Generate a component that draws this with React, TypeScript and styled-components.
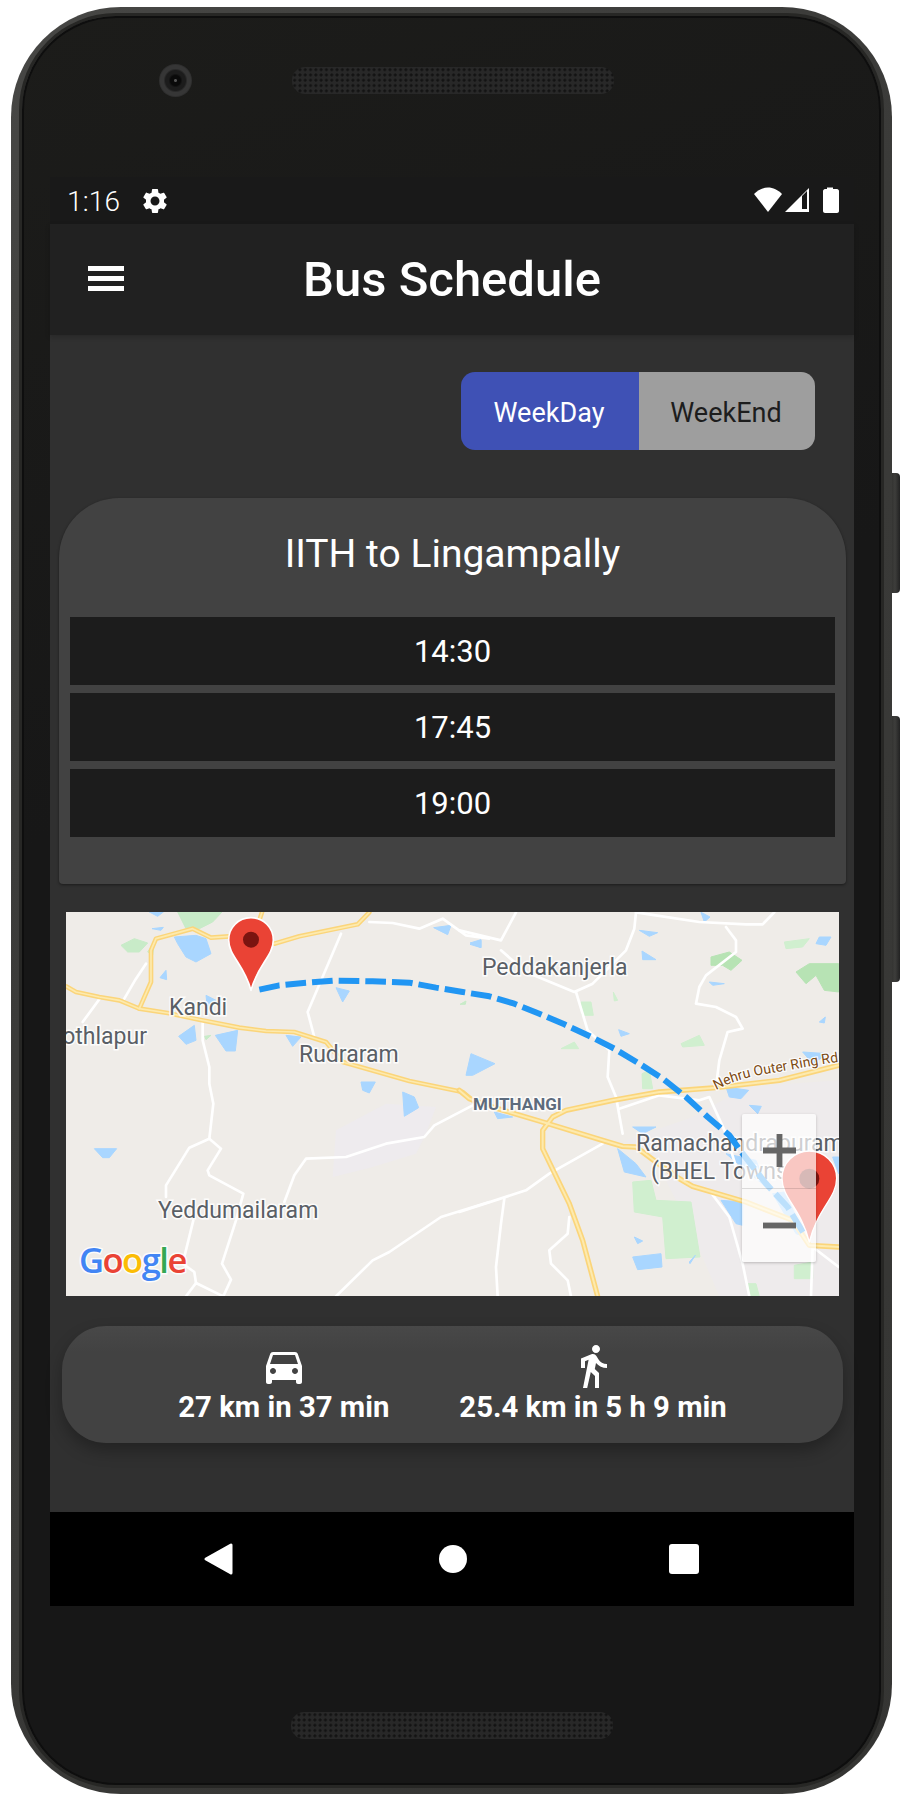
import React from "react";
import styled, { createGlobalStyle } from "styled-components";

const Global = createGlobalStyle`
  html, body { margin: 0; padding: 0; background: #fff; }
  body { font-family: Roboto, "Liberation Sans", sans-serif; overflow: hidden; }
  * { box-sizing: border-box; }
`;

const Page = styled.div`
  width: 909px;
  height: 1794px;
  padding: 7px 0 0 11px;
  overflow: hidden;
  position: relative;
`;
const SideKey = styled.div<{ $top: number; $h: number }>`
  position: absolute;
  left: 890px;
  top: ${(p) => p.$top}px;
  width: 10px;
  height: ${(p) => p.$h}px;
  border-radius: 0 4px 4px 0;
  background: linear-gradient(90deg, #2e2e2c, #3d3d3b 50%, #222 100%);
`;
const Frame = styled.div`
  position: relative;
  z-index: 1;
  width: 881px;
  height: 1787px;
  padding: 11px 13px 11px 13px;
  border-radius: 110px;
  background: linear-gradient(135deg, #474745 0%, #3c3c3a 30%, #353533 100%);
`;
const Bezel = styled.div`
  border-radius: 94px;
  border: 2px solid #0e0e0e;
  box-shadow: 0 0 0 3px #272725;
  background: linear-gradient(160deg, #1c1c1a, #171717 40%);
  display: flex;
  flex-direction: column;
  margin: -2px;
  width: 859px;
  height: calc(100% + 4px);
  overflow: hidden;
`;
const TopBezel = styled.div`
  height: 159px;
  flex: none;
  padding: 46px 0 0 135px;
  display: flex;
  align-items: flex-start;
  gap: 100px;
`;
const Camera = styled.div`
  width: 33px;
  height: 33px;
  border-radius: 50%;
  background: radial-gradient(circle, #555 0 1px, #0a0a0a 2px 5px, #1c1c1c 7px 10px, #363636 12px 15px, #2f2f2f 16px);
`;
const Speaker = styled.div`
  width: 322px;
  height: 27px;
  border-radius: 13px;
  background: #282828 radial-gradient(circle, #131313 1.2px, transparent 1.7px) 0 0 / 5.3px 5.3px;
  margin-top: 3px;
`;
const Screen = styled.div`
  flex: none;
  margin-left: 26px;
  width: 804px;
  height: 1429px;
  display: flex;
  flex-direction: column;
`;
const BottomBezel = styled.div`
  flex: 1;
  padding: 103px 0 0 267px;
`;

const StatusBar = styled.div`
  height: 47px;
  flex: none;
  background: #191919;
  display: flex;
  align-items: center;
  padding: 0 15px 2px 17px;
  color: #fff;
`;
const Clock = styled.span`
  font-size: 28px;
  font-weight: 300;
  letter-spacing: 0.2px;
  margin-top: 3px;
`;
const GearIcon = styled.svg`
  width: 30px;
  height: 30px;
  margin: 2px 0 0 20px;
  fill: #fff;
`;
const StatusIcons = styled.div`
  margin-left: auto;
  display: flex;
  align-items: center;
`;
const StatusSvg = styled.svg`
  display: block;
  fill: #fff;
`;

const AppBar = styled.header`
  height: 111px;
  flex: none;
  background: #212121;
  box-shadow: 0 2px 5px rgba(0, 0, 0, 0.18);
  display: grid;
  grid-template-columns: 1fr auto 1fr;
  align-items: center;
  position: relative;
  color: #fff;
`;
const Burger = styled.div`
  margin: 0 0 2px 38px;
  width: 36px;
  display: flex;
  flex-direction: column;
  gap: 5.5px;
  span {
    display: block;
    height: 4.5px;
    background: #fff;
  }
`;
const Title = styled.h1`
  margin: 0;
  font-size: 49px;
  font-weight: 500;
  line-height: 1;
`;

const Content = styled.main`
  flex: 1;
  background: #303030;
  display: flex;
  flex-direction: column;
  min-height: 0;
`;
const Toggle = styled.div`
  margin: 37px 39px 0 0;
  align-self: flex-end;
  display: flex;
  height: 78px;
  border-radius: 14px;
  overflow: hidden;
`;
const ToggleItem = styled.div<{ $on?: boolean; $w: number }>`
  width: ${(p) => p.$w}px;
  display: flex;
  align-items: center;
  justify-content: center;
  padding: 3px 2px 0 0;
  font-size: 27px;
  background: ${(p) => (p.$on ? "#3f51b5" : "#9e9e9e")};
  color: ${(p) => (p.$on ? "#fff" : "#1d1d1d")};
`;
const ScheduleCard = styled.section`
  margin: 48px 0 0 9px;
  width: 787px;
  height: 386px;
  flex: none;
  border-radius: 60px 60px 4px 4px;
  background: #424242;
  box-shadow: 0 1px 3px rgba(0, 0, 0, 0.45);
  padding: 0 11px;
  display: flex;
  flex-direction: column;
`;
const CardTitle = styled.h2`
  margin: 0;
  height: 119px;
  flex: none;
  display: flex;
  align-items: center;
  justify-content: center;
  padding-bottom: 8px;
  font-size: 39px;
  font-weight: 400;
  color: #fff;
`;
const Rows = styled.div`
  display: flex;
  flex-direction: column;
  gap: 8px;
`;
const TimeRow = styled.div`
  height: 68px;
  background: #1c1c1c;
  display: flex;
  align-items: center;
  justify-content: center;
  font-size: 31px;
  color: #fff;
`;
const MapBox = styled.div`
  position: relative;
  margin: 28px 0 0 16px;
  width: 773px;
  height: 384px;
  flex: none;
  overflow: hidden;
  background: #efece8;
`;
const MapSvg = styled.svg`
  display: block;
  width: 773px;
  height: 384px;
  font-family: Roboto, sans-serif;
`;
const Place = styled.text<{ $size?: number; $bold?: boolean }>`
  font-size: ${(p) => p.$size ?? 23}px;
  font-weight: ${(p) => (p.$bold ? 700 : 400)};
  fill: ${(p) => (p.$bold ? "#5d6b7d" : "#5a5f66")};
  stroke: rgba(255, 255, 255, 0.85);
  stroke-width: 3px;
  paint-order: stroke;
`;
const RoadName = styled.text`
  font-size: 14px;
  fill: #7c4a12;
  stroke: rgba(255, 255, 255, 0.85);
  stroke-width: 2.5px;
  paint-order: stroke;
`;
const GoogleMark = styled.text`
  font-family: "Open Sans", Roboto, sans-serif;
  font-size: 34.5px;
  font-weight: 600;
  letter-spacing: -1.5px;
  stroke: rgba(255, 255, 255, 0.85);
  stroke-width: 3px;
  paint-order: stroke;
`;
const ZoomPanel = styled.div`
  position: absolute;
  left: 676px;
  top: 202px;
  width: 74px;
  height: 148px;
  border-radius: 2px;
  background: rgba(255, 255, 255, 0.7);
  box-shadow: 0 1px 3px rgba(0, 0, 0, 0.22);
  display: flex;
  flex-direction: column;
`;
const ZoomBtn = styled.div<{ $divider?: boolean }>`
  flex: 1;
  position: relative;
  display: flex;
  align-items: center;
  justify-content: center;
  border-bottom: ${(p) => (p.$divider ? "1px solid rgba(0,0,0,.12)" : "none")};
`;
const ZoomSvg = styled.svg`
  width: 33px;
  height: 33px;
  fill: #666;
`;

const RouteCard = styled.section`
  margin: 30px 0 0 12px;
  width: 781px;
  height: 117px;
  flex: none;
  border-radius: 44px;
  background: linear-gradient(180deg, #484848, #424242 22%);
  box-shadow: 0 8px 16px rgba(0, 0, 0, 0.28);
  display: flex;
  justify-content: center;
  gap: 70px;
  padding-top: 16px;
  color: #fff;
`;
const RouteItem = styled.div`
  display: flex;
  flex-direction: column;
  align-items: center;
`;
const RouteIcon = styled.svg`
  width: 48px;
  height: 48px;
  fill: #fff;
  display: block;
`;
const RouteText = styled.span`
  font-size: 29.3px;
  font-weight: 700;
  line-height: 32px;
  margin-top: 1px;
`;
const NavBar = styled.nav`
  height: 94px;
  flex: none;
  background: #000;
  display: flex;
  align-items: center;
  justify-content: center;
  gap: 203px;
  padding-right: 3px;
`;
const NavSvg = styled.svg<{ $pull?: number }>`
  display: block;
  width: 32px;
  height: 34px;
  fill: #fff;
  margin-left: ${(p) => -(p.$pull ?? 0)}px;
`;

const water2 = [
  "M405,110 L470,105 L500,115 L515,160 L470,185 L440,170 L415,130 Z",
  "M330,35 L372,35 L355,48 Z",
  "M338,85 L372,81 L365,90 Z",
  "M362,232 L380,210 L382,238 Z",
  "M500,285 L530,300 L505,330 Z",
  "M418,408 L465,375 L470,420 L440,432 Z",
  "M528,405 L595,390 L588,452 L560,452 Z",
  "M740,405 L785,410 L760,438 Z",
  "M890,262 L930,272 L910,305 Z",
  "M1183,82 L1235,75 L1225,103 Z",
  "M1292,132 L1325,120 L1325,142 Z",
  "M965,545 L1008,545 L990,578 L970,570 Z",
  "M1090,575 L1125,590 L1138,622 L1095,648 Z",
  "M165,745 L232,745 L210,772 L190,772 Z",
];
const green2 = [
  "M415,35 L548,35 L520,65 L480,85 L440,85 Z",
  "M245,135 L285,115 L325,128 L300,155 L265,155 Z",
  "M325,155 L345,125 L340,165 Z",
  "M1262,312 L1280,302 L1278,312 Z",
  "M496,408 L515,405 L500,418 Z",
];
const white2 = [
  "M130,365 L185,290",
  "M255,295 L290,235 L320,190",
  "M490,365 L490,420 L510,500 L510,550 L522,610 L510,715 L450,742 L380,855 L380,890",
  "M510,715 L545,745 L505,810 L510,825 L612,880 L590,960 L548,1090 L575,1138 L552,1188 L470,1148 L440,1188",
  "M462,960 L430,1090 L465,1115 L470,1148",
  "M735,905 L765,825 L800,775 L920,770 L1040,730 L1155,710 L1185,675 L1300,615",
  "M890,1188 L1000,1080 L1050,1055 L1205,950 L1350,905",
  "M905,100 L805,335 L825,410",
  "M990,65 L1060,68 L1140,85 L1210,55 L1280,105 L1350,115",
];
const yellow2 = [
  "M80,258 L110,275 L180,290 L240,300 L300,325 L385,338 L480,358 L600,382 L680,392 L765,395 L860,425 L910,485 L1110,542 L1270,575 L1300,600",
  "M300,325 L335,245 L335,150 L350,115 L460,85 L515,112 L570,108 L640,105 L705,130 L780,108 L955,72 L990,36",
  "M668,36 L660,60",
];
const water3 = [
  "M540,90 L595,97 L570,108 Z",
  "M548,152 L590,178 L550,178 Z",
  "M725,36 L752,50 L735,65 Z",
  "M32,128 L65,118 L65,142 Z",
  "M1080,110 L1115,110 L1100,135 L1070,130 Z",
  "M750,245 L795,250 L760,255 Z",
  "M20,525 L35,460 L107,490 L40,525 Z",
  "M478,388 L510,400 L485,408 Z",
  "M1030,455 L1105,460 L1060,490 Z",
  "M1080,365 L1098,350 L1095,368 Z",
  "M800,560 L868,570 L845,595 L810,590 Z",
  "M870,615 L906,618 L895,640 Z",
  "M520,680 L590,680 L550,700 Z",
  "M105,635 L160,650 L115,655 Z",
  "M475,745 L530,790 L560,830 L495,815 Z",
  "M785,900 L850,905 L850,975 L830,970 Z",
  "M520,1070 L605,1060 L608,1100 L535,1108 Z",
  "M690,1085 L708,1065 L692,1090 Z",
  "M525,1010 L550,1022 L535,1030 Z",
  "M800,760 L890,780 L920,860 Z",
  "M940,880 L975,875 L1040,1010 L1010,1000 Z",
  "M1120,770 L1138,770 L1138,820 Z",
];
const green3 = [
  "M1010,215 L1050,190 L1138,190 L1138,275 L1095,270 L1070,225 L1040,250 Z",
  "M755,170 L810,155 L848,180 L815,210 L790,195 L755,195 Z",
];
const paleGreen3 = [
  "M975,125 L1050,115 L1030,140 L980,145 Z",
  "M520,845 L575,840 L590,900 L695,905 L722,1070 L620,1075 L610,950 L525,935 Z",
  "M665,430 L720,405 L735,435 L670,440 Z",
  "M305,445 L345,425 L358,445 Z",
  "M365,305 L395,305 L402,345 L368,345 Z",
  "M462,275 L475,300 L465,302 Z",
  "M548,520 L570,510 L580,565 L550,565 Z",
  "M1005,1095 L1060,1085 L1060,1135 L1005,1135 Z",
  "M865,1150 L890,1150 L900,1188 L870,1188 Z",
];
const white3 = [
  "M170,36 L125,120 L0,90",
  "M125,150 L200,215 L345,275 L400,250 L500,150 L525,85 L530,36",
  "M350,275 L385,390 L450,450 L445,530 L470,590 L490,700",
  "M530,36 L720,65 L860,72 L910,72 L945,36",
  "M800,80 L830,120 L830,155 L740,225 L720,260 L710,310 L770,320 L830,350 L850,385 L805,395 L780,480 L770,560",
  "M480,625 L600,585 L720,600 L750,590 L800,700 L830,800",
  "M0,935 L200,870 L270,820 L430,730",
  "M135,895 L125,970 L110,1100 L115,1188",
  "M330,950 L325,1000 L270,1050 L275,1090 L325,1140 L335,1188",
  "M750,870 L810,950 L850,1090 L870,1188",
  "M1060,1040 L1055,1188",
  "M1060,1040 L1138,1100",
];
const yellow3 = [
  "M0,570 L30,595 L115,625 L250,665 L430,720 L490,738 L530,740 L590,785 L660,835 L700,858 L860,905 L1000,960 L1050,1035 L1138,1040",
  "M1138,495 L960,540 L770,562 L600,575 L460,600 L320,630 L280,650 L250,690 L250,745 L330,910 L370,1020 L415,1188",
];
const routePts =
  "660,268 720,255 800,247 880,241 1000,243 1110,247 1190,262 1270,275 1350,288 1425,310 1500,340 1575,372 1650,407 1725,445 1800,490 1870,535 1940,590 2005,650 2070,705 2110,760 2180,850 2245,920 2300,1010";
const pinPath = (cx: number, top: number, hw: number, tip: number) => {
  const cy = top + hw;
  return `M${cx},${top} C${cx - hw * 0.56},${top} ${cx - hw},${top + hw * 0.45} ${cx - hw},${cy} C${cx - hw},${cy + hw * 0.72} ${cx - hw * 0.3},${cy + hw * 1.1} ${cx},${tip} C${cx + hw * 0.3},${cy + hw * 1.1} ${cx + hw},${cy + hw * 0.72} ${cx + hw},${cy} C${cx + hw},${top + hw * 0.45} ${cx + hw * 0.56},${top} ${cx},${top} Z`;
};

const Paths = ({ d, stroke, w }: { d: string[]; stroke: string; w: number }) => (
  <g fill="none" stroke={stroke} strokeWidth={w} strokeLinejoin="round" strokeLinecap="round">
    {d.map((p) => (
      <path key={p} d={p} />
    ))}
  </g>
);
const Fills = ({ d, fill }: { d: string[]; fill: string }) => (
  <g fill={fill} stroke={fill} strokeWidth={3} strokeLinejoin="round">
    {d.map((p) => (
      <path key={p} d={p} />
    ))}
  </g>
);

const MapView = () => (
  <MapBox>
    <MapSvg viewBox="0 0 773 384">
      <g transform="translate(-26.67,-11.67) scale(0.33333)">
        <path
          d="M890,690 L1040,610 L1190,620 L1160,700 L1130,760 L1000,800 L880,830 Z"
          fill="#eeebee"
        />
        <path
          d="M2120,560 L2400,540 L2400,1188 L2040,1188 L1960,1000 L1860,800 L1760,720 L1960,650 Z"
          fill="#eeebec"
        />
        <Fills d={green2} fill="#c8ebc8" />
        <Fills d={water2} fill="#a9d6ff" />
        <Paths d={white2} stroke="#ffffff" w={8} />
        <Paths d={yellow2} stroke="#fbd57a" w={14} />
        <Paths d={yellow2} stroke="#fdeaae" w={5} />
        <g transform="translate(1260 0)">
          <Fills d={green3} fill="#b7e3b4" />
          <Fills d={paleGreen3} fill="#d0efcf" />
          <Fills d={water3} fill="#a9d6ff" />
          <Paths d={white3} stroke="#ffffff" w={8} />
          <Paths d={yellow3} stroke="#fbd57a" w={16} />
          <Paths d={yellow3} stroke="#fdeaae" w={6} />
        </g>
      </g>
      <Place x={103} y={103}>Kandi</Place>
      <Place x={81} y={132} textAnchor="end">othlapur</Place>
      <Place x={233} y={150}>Rudraram</Place>
      <Place x={92} y={306}>Yeddumailaram</Place>
      <Place x={416} y={63}>Peddakanjerla</Place>
      <Place x={407} y={198} $size={17} $bold>MUTHANGI</Place>
      <Place x={570} y={239}>Ramachandrapuram</Place>
      <Place x={585} y={267}>(BHEL Township)</Place>
      <defs>
        <path id="ringRoad" d="M650,178 C668,168 690,163 712,160 C730,157 748,153 772,150" />
      </defs>
      <RoadName>
        <textPath href="#ringRoad">Nehru Outer Ring Rd</textPath>
      </RoadName>
      <GoogleMark x={13} y={361}>
        <tspan fill="#4285f4">G</tspan>
        <tspan fill="#ea4335">o</tspan>
        <tspan fill="#fbbc05">o</tspan>
        <tspan fill="#4285f4">g</tspan>
        <tspan fill="#34a853">l</tspan>
        <tspan fill="#ea4335">e</tspan>
      </GoogleMark>
      <g transform="translate(-26.67,-11.67) scale(0.33333)">
        <polyline
          points={routePts}
          fill="none"
          stroke="#2196f3"
          strokeWidth={18}
          strokeDasharray="62 18"
          strokeLinejoin="round"
        />
        <path d={pinPath(635, 52, 67, 270)} fill="#ea4335" stroke="#fff" strokeWidth={5} strokeLinejoin="round" />
        <circle cx={635} cy={118} r={24} fill="#7b1410" />
        <g transform="translate(1260 0)">
          <path d={pinPath(1050, 752, 82, 1025)} fill="#ea4335" stroke="#fff" strokeWidth={4} strokeLinejoin="round" />
          <circle cx={1050} cy={835} r={30} fill="#7b1410" />
        </g>
      </g>
    </MapSvg>
    <ZoomPanel>
      <ZoomBtn $divider>
        <ZoomSvg viewBox="0 0 34 34">
          <path d="M14,0 H20 V14 H34 V20 H20 V34 H14 V20 H0 V14 H14 Z" />
        </ZoomSvg>
      </ZoomBtn>
      <ZoomBtn>
        <ZoomSvg viewBox="0 0 34 34">
          <rect x="0" y="14" width="34" height="6" />
        </ZoomSvg>
      </ZoomBtn>
    </ZoomPanel>
  </MapBox>
);

export default function App() {
  return (
    <Page>
      <Global />
      <SideKey $top={473} $h={120} />
      <SideKey $top={716} $h={266} />
      <Frame>
        <Bezel>
          <TopBezel>
            <Camera />
            <Speaker />
          </TopBezel>
          <Screen>
            <StatusBar>
              <Clock>1:16</Clock>
              <GearIcon viewBox="0 0 24 24">
                <path d="M19.14 12.94c.04-.3.06-.61.06-.94 0-.32-.02-.64-.07-.94l2.03-1.58c.18-.14.23-.41.12-.61l-1.92-3.32c-.12-.22-.37-.29-.59-.22l-2.39.96c-.5-.38-1.03-.7-1.62-.94l-.36-2.54c-.04-.24-.24-.41-.48-.41h-3.84c-.24 0-.43.17-.47.41l-.36 2.54c-.59.24-1.13.57-1.62.94l-2.39-.96c-.22-.08-.47 0-.59.22L2.74 8.87c-.12.21-.08.47.12.61l2.03 1.58c-.05.3-.09.63-.09.94s.02.64.07.94l-2.03 1.58c-.18.14-.23.41-.12.61l1.92 3.32c.12.22.37.29.59.22l2.39-.96c.5.38 1.03.7 1.62.94l.36 2.54c.05.24.24.41.48.41h3.84c.24 0 .44-.17.47-.41l.36-2.54c.59-.24 1.13-.56 1.62-.94l2.39.96c.22.08.47 0 .59-.22l1.92-3.32c.12-.22.07-.47-.12-.61l-2.01-1.58zM12 15.6c-1.98 0-3.6-1.62-3.6-3.6s1.62-3.6 3.6-3.6 3.6 1.62 3.6 3.6-1.62 3.6-3.6 3.6z" />
              </GearIcon>
              <StatusIcons>
                <StatusSvg width="85" height="26" viewBox="0 0 85 26">
                  <path d="M14,25 L0,7 C4,3 9,0.5 14,0.5 C19,0.5 24,3 28,7 Z" />
                  <path fillRule="evenodd" d="M31,25 L55,1 V25 Z M48,9 V22 H53 V4 Z" />
                  <path d="M73,2 V0.5 H79 V2 H83 C84,2 85,3 85,4 V24 C85,25 84,26 83,26 H71 C70,26 69,25 69,24 V4 C69,3 70,2 71,2 Z" />
                </StatusSvg>
              </StatusIcons>
            </StatusBar>
            <AppBar>
              <Burger>
                <span />
                <span />
                <span />
              </Burger>
              <Title>Bus Schedule</Title>
              <div />
            </AppBar>
            <Content>
              <Toggle>
                <ToggleItem $on $w={178}>WeekDay</ToggleItem>
                <ToggleItem $w={176}>WeekEnd</ToggleItem>
              </Toggle>
              <ScheduleCard>
                <CardTitle>IITH to Lingampally</CardTitle>
                <Rows>
                  <TimeRow>14:30</TimeRow>
                  <TimeRow>17:45</TimeRow>
                  <TimeRow>19:00</TimeRow>
                </Rows>
              </ScheduleCard>
              <MapView />
              <RouteCard>
                <RouteItem>
                  <RouteIcon viewBox="0 0 24 24">
                    <path d="M18.92 6.01C18.72 5.42 18.16 5 17.5 5h-11c-.66 0-1.21.42-1.42 1.01L3 12v8c0 .55.45 1 1 1h1c.55 0 1-.45 1-1v-1h12v1c0 .55.45 1 1 1h1c.55 0 1-.45 1-1v-8l-2.08-5.99zM6.5 16c-.83 0-1.5-.67-1.5-1.5S5.67 13 6.5 13s1.5.67 1.5 1.5S7.33 16 6.5 16zm11 0c-.83 0-1.5-.67-1.5-1.5s.67-1.5 1.5-1.5 1.5.67 1.5 1.5-.67 1.5-1.5 1.5zM5 11l1.5-4.5h11L19 11H5z" />
                  </RouteIcon>
                  <RouteText>27 km in 37 min</RouteText>
                </RouteItem>
                <RouteItem>
                  <RouteIcon viewBox="0 0 24 24">
                    <path d="M13.5 5.5c1.1 0 2-.9 2-2s-.9-2-2-2-2 .9-2 2 .9 2 2 2zM9.8 8.9L7 23h2.1l1.8-8 2.1 2v6h2v-7.5l-2.1-2 .6-3C14.8 12 16.8 13 19 13v-2c-1.9 0-3.5-1-4.3-2.4l-1-1.6c-.4-.6-1-1-1.7-1-.3 0-.5.1-.8.1L6 8.3V13h2V9.6l1.8-.7" />
                  </RouteIcon>
                  <RouteText>25.4 km in 5 h 9 min</RouteText>
                </RouteItem>
              </RouteCard>
            </Content>
            <NavBar>
              <NavSvg viewBox="0 0 32 34">
                <path d="M29,3 V31 L4,17 Z" stroke="#fff" strokeWidth="3" strokeLinejoin="round" />
              </NavSvg>
              <NavSvg viewBox="0 0 32 34">
                <circle cx="16" cy="17" r="14" />
              </NavSvg>
              <NavSvg $pull={4} viewBox="0 0 32 34">
                <rect x="1" y="2" width="30" height="30" rx="3" />
              </NavSvg>
            </NavBar>
          </Screen>
          <BottomBezel>
            <Speaker />
          </BottomBezel>
        </Bezel>
      </Frame>
    </Page>
  );
}
